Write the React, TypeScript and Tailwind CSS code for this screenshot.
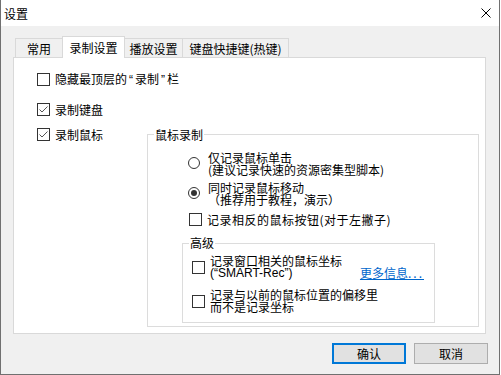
import React from "react";

function Box({ checked }: { checked?: boolean }) {
  return (
    <span className="w-[13px] h-[13px] shrink-0 border border-[#333] bg-white flex items-center justify-center">
      {checked && (
        <svg width="11" height="11" viewBox="0 0 11 11">
          <path d="M1.5 5.5 L4 8 L9.5 2.5" stroke="#555" strokeWidth="1" fill="none" />
        </svg>
      )}
    </span>
  );
}

function Radio({ on }: { on?: boolean }) {
  return (
    <span className="mt-[5px] w-[12px] h-[12px] shrink-0 rounded-full border border-[#333] bg-white flex items-center justify-center">
      {on && <span className="w-[6px] h-[6px] rounded-full bg-[#333]" />}
    </span>
  );
}

function Tab({ label, width, active }: { label: string; width: string; active?: boolean }) {
  return (
    <div
      className={`${width} flex items-center justify-center border-t border-l border-r border-[#d9d9d9] -ml-px first:ml-0 ${
        active ? "h-[22px] bg-white relative z-10" : "h-[20px] bg-[#f0f0f0]"
      }`}
    >
      {label}
    </div>
  );
}

export default function App() {
  return (
    <div className="w-[501px] h-[375px] bg-white">
      <div className="w-[500px] h-[375px] flex flex-col bg-[#f0f0f0] border-x border-b border-[#707070] text-[12px] leading-[13px] text-black font-['Noto_Sans_CJK_SC',sans-serif]">
        {/* title bar */}
        <div className="h-[26px] shrink-0 bg-white flex items-center justify-between pl-[3px] pr-[8px]">
          <span>设置</span>
          <svg width="10" height="10" viewBox="0 0 10 10">
            <path d="M0.5 0.5 L9.5 9.5 M9.5 0.5 L0.5 9.5" stroke="#000" strokeWidth="1" />
          </svg>
        </div>

        {/* tabs */}
        <div className="flex items-end ml-[14px] mt-[10px]">
          <Tab label="常用" width="w-[48px]" />
          <Tab label="录制设置" width="w-[63px]" active />
          <Tab label="播放设置" width="w-[59px]" />
          <Tab label="键盘快捷键(热键)" width="w-[107px]" />
        </div>

        {/* panel */}
        <div className="ml-[12px] -mt-px w-[473px] h-[277px] shrink-0 border border-[#d9d9d9] bg-white pl-[23px] pt-[15px] flex flex-col">
          <div className="h-[13px] flex items-center gap-[5px]">
            <Box />
            <span>
              隐藏最顶层的<span className="font-['Liberation_Sans',sans-serif] mx-[2px]">“</span>录制
              <span className="font-['Liberation_Sans',sans-serif] mx-[2px]">”</span>栏
            </span>
          </div>
          <div className="mt-[17px] h-[13px] flex items-center gap-[5px]">
            <Box checked />
            <span>录制键盘</span>
          </div>
          <div className="mt-[12px] flex items-start">
            <div className="w-[110px] h-[13px] flex items-center gap-[5px]">
              <Box checked />
              <span>录制鼠标</span>
            </div>

            <fieldset className="w-[332px] h-[199px] border border-[#dcdcdc] p-0">
              <legend className="ml-[6px] px-[1px] leading-[13px]">鼠标录制</legend>
              <div className="pl-[40px] pt-[11px]">
                <div className="flex items-start gap-[8px]">
                  <Radio />
                  <div className="leading-[12px]">
                    <div>仅记录鼠标单击</div>
                    <div>(建议记录快速的资源密集型脚本)</div>
                  </div>
                </div>
                <div className="mt-[6px] flex items-start gap-[8px]">
                  <Radio on />
                  <div className="leading-[12px]">
                    <div>同时记录鼠标移动</div>
                    <div>（推荐用于教程，演示）</div>
                  </div>
                </div>
                <div className="mt-[7px] ml-[1px] h-[13px] flex items-center gap-[5px]">
                  <Box />
                  <span className="tracking-[0.5px]">记录相反的鼠标按钮(对于左撇子)</span>
                </div>

                <fieldset className="mt-[11px] -ml-[6px] w-[253px] h-[86px] border border-[#dcdcdc] p-0">
                  <legend className="ml-[6px] px-[1px] leading-[12px]">高级</legend>
                  <div className="pl-[9px] pr-[10px] pt-[6px]">
                    <div className="flex items-center gap-[5px]">
                      <Box />
                      <div className="leading-[12px]">
                        <div>记录窗口相关的鼠标坐标</div>
                        <div className="font-['Liberation_Sans',sans-serif]">(“SMART-Rec”)</div>
                      </div>
                      <span className="ml-auto self-end leading-[12px] text-[#0066cc] underline">
                        更多信息<span className="tracking-[2px]">...</span>
                      </span>
                    </div>
                    <div className="mt-[10px] flex items-center gap-[5px]">
                      <Box />
                      <div className="leading-[12px]">
                        <div>记录与以前的鼠标位置的偏移里</div>
                        <div>而不是记录坐标</div>
                      </div>
                    </div>
                  </div>
                </fieldset>
              </div>
            </fieldset>
          </div>
        </div>

        {/* buttons */}
        <div className="mt-[9px] flex justify-end gap-[8px] pr-[11px]">
          <button className="w-[74px] h-[21px] border-2 border-[#0078d7] bg-[#e1e1e1] flex items-center justify-center">
            确认
          </button>
          <button className="w-[74px] h-[21px] border border-[#adadad] bg-[#e1e1e1] flex items-center justify-center">
            取消
          </button>
        </div>
      </div>
    </div>
  );
}
